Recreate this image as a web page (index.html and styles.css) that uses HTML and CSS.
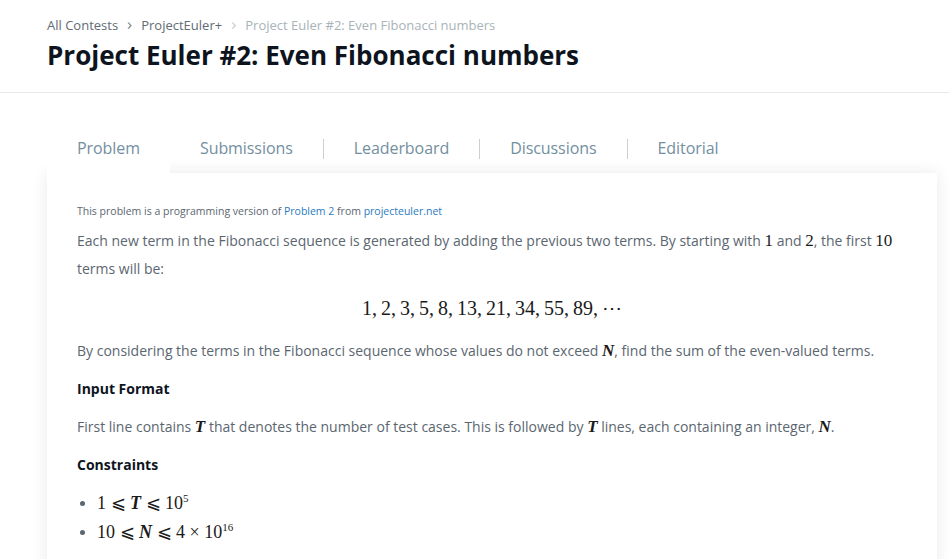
FILE: index.html
```html
<!DOCTYPE html>
<html lang="en">
<head>
<meta charset="utf-8">
<title>Project Euler #2: Even Fibonacci numbers</title>
<link rel="stylesheet" href="styles.css">
</head>
<body>
<header class="page-header">
  <nav class="breadcrumb">
    <a class="crumb" href="#">All Contests</a>
    <span class="chev">&#8250;</span>
    <a class="crumb" href="#">ProjectEuler+</a>
    <span class="chev light">&#8250;</span>
    <span class="crumb current">Project Euler #2: Even Fibonacci numbers</span>
  </nav>
  <h1 class="title">Project Euler #2: Even Fibonacci numbers</h1>
</header>
<main class="main">
  <div class="tabs">
    <a class="tab active" href="#">Problem</a>
    <a class="tab" href="#">Submissions</a>
    <span class="sep"></span>
    <a class="tab" href="#">Leaderboard</a>
    <span class="sep"></span>
    <a class="tab" href="#">Discussions</a>
    <span class="sep"></span>
    <a class="tab" href="#">Editorial</a>
  </div>
  <section class="card">
    <p class="note">This problem is a programming version of <a href="#">Problem 2</a> from <a href="#">projecteuler.net</a></p>
    <p class="para">Each new term in the Fibonacci sequence is generated by adding the previous two terms. By starting with <span class="m">1</span> and <span class="m">2</span>, the first <span class="m">10</span> terms will be:</p>
    <div class="display"><span class="m dm">1,&#8201;2,&#8201;3,&#8201;5,&#8201;8,&#8201;13,&#8201;21,&#8201;34,&#8201;55,&#8201;89,&#8201;&#8943;</span></div>
    <p class="para">By considering the terms in the Fibonacci sequence whose values do not exceed <span class="m mi">N</span>, find the sum of the even-valued terms.</p>
    <h3 class="sub">Input Format</h3>
    <p class="para">First line contains <span class="m mi">T</span> that denotes the number of test cases. This is followed by <span class="m mi">T</span> lines, each containing an integer, <span class="m mi">N</span>.</p>
    <h3 class="sub">Constraints</h3>
    <ul class="list">
      <li><span class="m">1 <span class="rel">&#10877;</span> <span class="mi">T</span> <span class="rel">&#10877;</span> 10<sup>5</sup></span></li>
      <li><span class="m">10 <span class="rel">&#10877;</span> <span class="mi">N</span> <span class="rel">&#10877;</span> 4 &#215; 10<sup>16</sup></span></li>
    </ul>
  </section>
</main>
</body>
</html>
```

FILE: styles.css
```css
html, body {
  margin: 0;
  padding: 0;
  background: #ffffff;
}

body {
  font-family: "Open Sans", "Noto Sans", sans-serif;
  color: #5b6670;
  overflow: hidden;
}

a {
  text-decoration: none;
}

.page-header {
  padding: 15px 47px 0;
  height: 77px;
  border-bottom: 1px solid #e8e8e8;
}

.breadcrumb {
  display: flex;
  align-items: center;
  gap: 9px;
  font-size: 13px;
  line-height: 20px;
}

.crumb {
  color: #5f6b73;
}

.crumb.current {
  color: #a8b3b7;
}

.chev {
  color: #7a8489;
  font-size: 17px;
  line-height: 20px;
  margin-top: -2px;
}

.chev.light {
  color: #c4ccce;
}

.title {
  margin: 2px 0 0;
  font-size: 26px;
  line-height: 36px;
  font-weight: 700;
  color: #0e141e;
}

.main {
  margin: 32px 12px 0 47px;
}

.tabs {
  display: flex;
  align-items: center;
  height: 48px;
}

.tab {
  display: block;
  padding: 0 30px 2px;
  line-height: 46px;
  font-size: 16px;
  letter-spacing: -0.07px;
  color: #738f9f;
}

.tab.active {
  background: #ffffff;
  position: relative;
  z-index: 2;
}

.sep {
  width: 1px;
  height: 20px;
  background: #c9d0d4;
}

.card {
  position: relative;
  z-index: 1;
  width: 890px;
  box-sizing: border-box;
  padding: 30px 30px 20px;
  background: #ffffff;
  box-shadow: 0 0 16px rgba(0, 0, 0, 0.09);
  min-height: 400px;
}

.note {
  margin: 0 0 8px;
  font-size: 10.5px;
  line-height: 16px;
  color: #5b6670;
}

.note a {
  color: #2a7bc0;
}

.para {
  margin: 0 0 10px;
  font-size: 14px;
  line-height: 28px;
}

.m {
  font-family: "Liberation Serif", "Times New Roman", serif;
  font-size: 17px;
  color: #1a1a1a;
}

.mi {
  font-style: italic;
  font-weight: 700;
}

.display {
  margin: 11px 0 14px;
  text-align: center;
  line-height: 28px;
}

.dm {
  font-size: 20px;
}

.sub {
  margin: 0 0 10px;
  font-size: 14px;
  line-height: 28px;
  font-weight: 700;
  color: #0e141e;
}

.list {
  margin: 8px 0 0;
  padding-left: 20px;
  font-size: 14px;
  line-height: 28px;
  color: #5b6670;
}

.list .m {
  font-size: 18px;
}

.rel {
  font-style: normal;
  font-weight: 400;
}

sup {
  font-size: 11px;
  line-height: 0;
  vertical-align: 7px;
}
```
